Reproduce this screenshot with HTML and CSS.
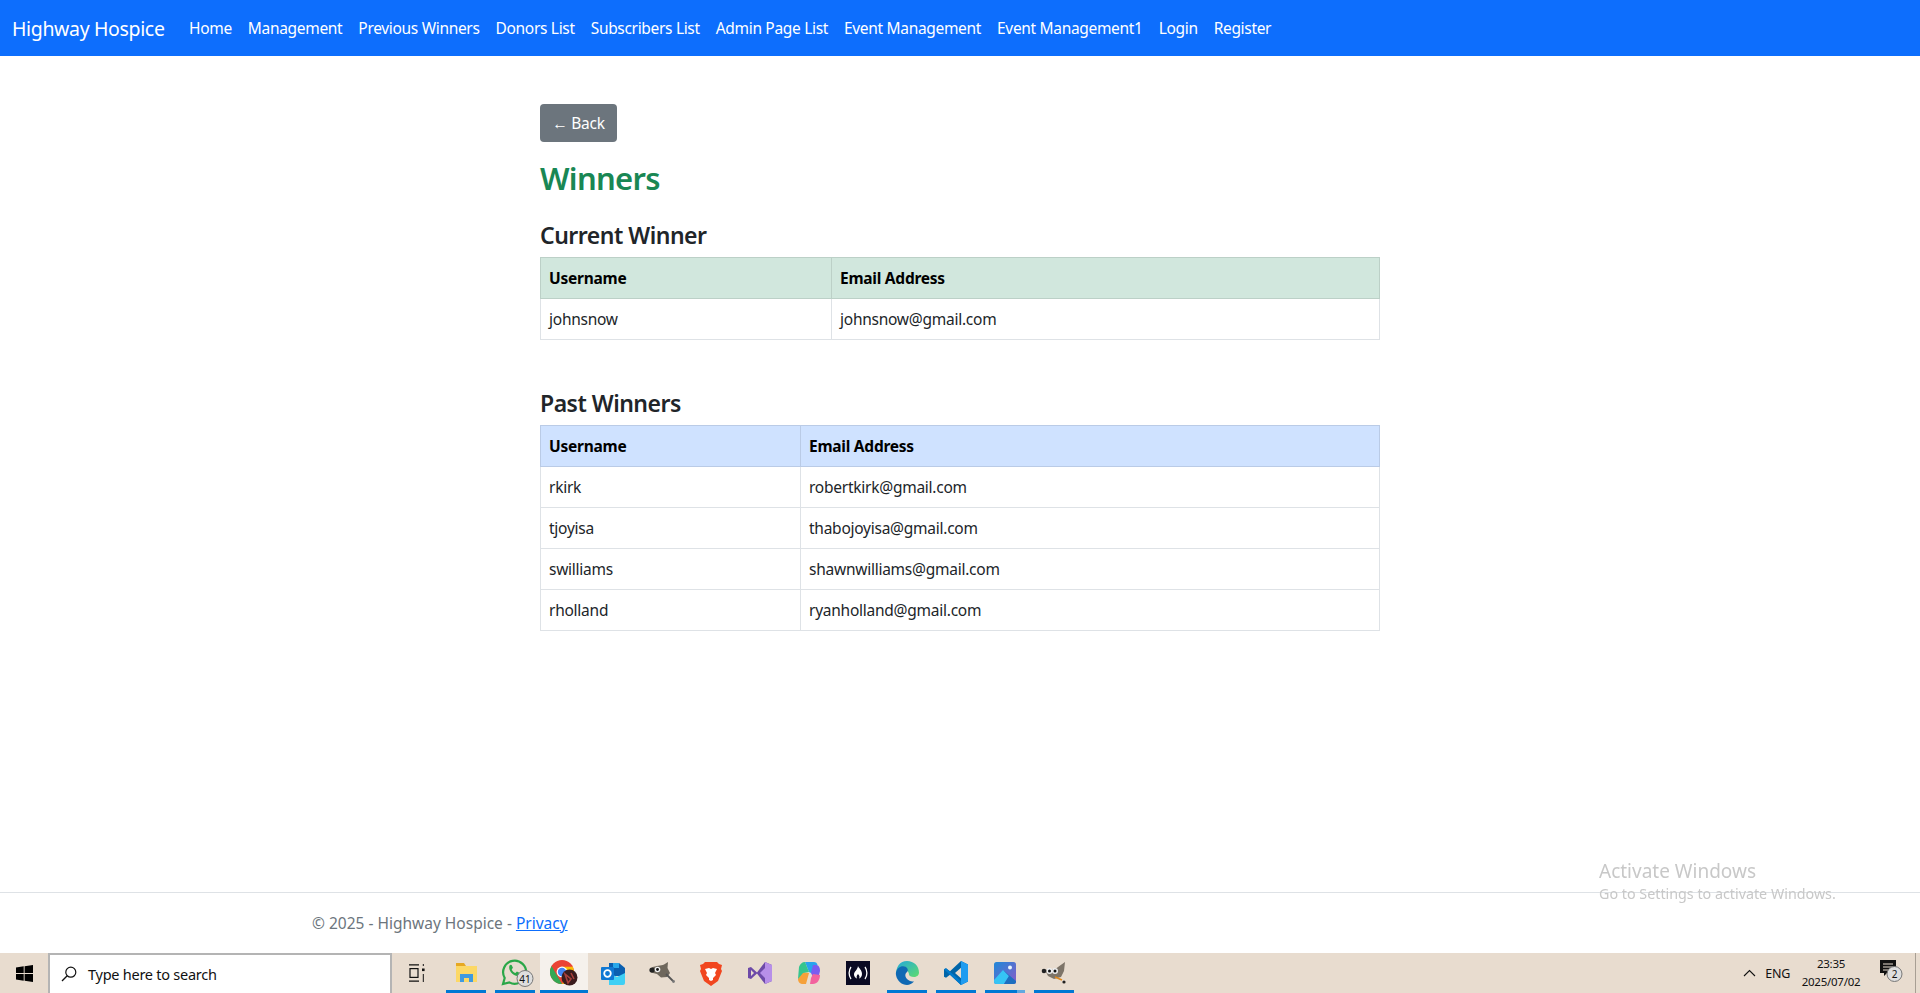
FILE: index.html

```html
<!DOCTYPE html>
<html lang="en">
<head>
    <meta charset="UTF-8">
    <meta name="viewport" content="width=device-width, initial-scale=1.0">
    <title>Winners - Highway Hospice</title>
    <link rel="stylesheet" href="styles.css">
</head>
<body>

    <!-- Navbar -->
    <header class="navbar">
        <a class="brand" href="#">Highway Hospice</a>
        <nav class="nav-links">
            <a href="#">Home</a>
            <a href="#">Management</a>
            <a href="#">Previous Winners</a>
            <a href="#">Donors List</a>
            <a href="#">Subscribers List</a>
            <a href="#">Admin Page List</a>
            <a href="#">Event Management</a>
            <a href="#">Event Management1</a>
            <a href="#">Login</a>
            <a href="#">Register</a>
        </nav>
    </header>

    <main class="content">
        <a class="back-button" href="#">← Back</a>
        <h2 class="page-title">Winners</h2>

        <h4 class="section-title">Current Winner</h4>
        <table class="winners current">
            <thead>
                <tr>
                    <th class="col-name">Username</th>
                    <th>Email Address</th>
                </tr>
            </thead>
            <tbody>
                <tr><td>johnsnow</td><td>johnsnow@gmail.com</td></tr>
            </tbody>
        </table>

        <h4 class="section-title past-title">Past Winners</h4>
        <table class="winners past">
            <thead>
                <tr>
                    <th class="col-name">Username</th>
                    <th>Email Address</th>
                </tr>
            </thead>
            <tbody>
                <tr><td>rkirk</td><td>robertkirk@gmail.com</td></tr>
                <tr><td>tjoyisa</td><td>thabojoyisa@gmail.com</td></tr>
                <tr><td>swilliams</td><td>shawnwilliams@gmail.com</td></tr>
                <tr><td>rholland</td><td>ryanholland@gmail.com</td></tr>
            </tbody>
        </table>
    </main>

    <footer class="footer">
        <span>© 2025 - Highway Hospice - </span><a href="#">Privacy</a>
    </footer>

    <!-- Windows taskbar -->
    <div class="taskbar">
        <div class="start">
            <svg width="17" height="17" viewBox="0 0 17 17"><path fill="#000" d="M0 2.4 7.7 1.3V8H0zM8.6 1.2 17 0V8H8.6zM0 9h7.7v6.7L0 14.6zM8.6 9H17v8l-8.4-1.2z"/></svg>
        </div>
        <div class="search">
            <svg width="16" height="16" viewBox="0 0 16 16"><circle cx="9.8" cy="6.2" r="5" fill="none" stroke="#111" stroke-width="1.2"/><path d="M6.2 9.8 1 15" stroke="#111" stroke-width="1.3"/></svg>
            <span>Type here to search</span>
        </div>
        <div class="task-item taskview">
            <svg width="17" height="18" viewBox="0 0 17 18"><g fill="none" stroke="#111" stroke-width="1.2"><path d="M1 .8h10M1 17.2h10"/><rect x="2" y="4.6" width="8" height="8.8"/></g><rect x="14" y="4.5" width="2.6" height="2.6" fill="#111"/><path d="M15.3 0v2M15.3 10v8" stroke="#111" stroke-width="1"/></svg>
        </div>
        <div class="task-item open">
            <svg width="24" height="22" viewBox="0 0 24 22"><path fill="#e6a823" d="M2 1h8l2 3H2z"/><rect x="2" y="4" width="21" height="16" fill="#fcd866"/><path fill="#3f9ae0" d="M6 20v-8h13v8h-4v-4H10v4z"/></svg>
        </div>
        <div class="task-item open">
            <svg class="whatsapp" width="36" height="30" viewBox="0 0 36 30"><path fill="none" stroke="#2aa748" stroke-width="2.200" d="M3 26l1.700-6A11.500 11.500 0 1 1 9.300 24.400z"/><path fill="#2aa748" d="M9.500 7.500c1-1 2-.8 2.400 0l1 2.300-1.200 1.600c.8 1.700 2 2.800 3.700 3.600l1.500-1.400 2.500 1.100c.6 1 .2 2.200-1 3-3 1.500-10.900-4.200-8.900-10.200z"/><circle cx="25" cy="20.500" r="8" fill="#dedede" stroke="#777" stroke-width="1"/><text x="25" y="24.800" class="badge-num" text-anchor="middle">41</text></svg>
        </div>
        <div class="task-item open active">
            <svg width="28" height="26" viewBox="0 0 28 26"><circle cx="12" cy="12" r="12" fill="#ea4335"/><path fill="#34a853" d="M1.600 6 7 15.500 12 24A12 12 0 0 1 1.600 6z"/><path fill="#fbbc05" d="M12 6.800h10.800A12 12 0 0 1 12 24l5-8.500z"/><circle cx="12" cy="12" r="5.400" fill="#fff"/><circle cx="12" cy="12" r="4.200" fill="#4285f4"/><circle cx="19.500" cy="17.500" r="8" fill="#3a1c1e"/><path d="M15 14l6 5-3 4zM21 13l3 6" stroke="#a8403c" stroke-width="1.600" fill="none"/></svg>
        </div>
        <div class="task-item">
            <svg width="24" height="24" viewBox="0 0 24 24"><path fill="#0a5fb0" d="M8 2h10l6 5v8H8z"/><path fill="#28a8ea" d="M12 2h6v5h-6z"/><path fill="#3fd0f5" d="M8 12l8 4 8-4v10a2 2 0 0 1-2 2H8z"/><rect x="0" y="6" width="13" height="13" rx="1" fill="#0f78d4"/><circle cx="6.500" cy="12.500" r="3.300" fill="none" stroke="#fff" stroke-width="1.800"/></svg>
        </div>
        <div class="task-item">
            <svg width="26" height="22" viewBox="0 0 26 22"><path fill="#6e675c" d="M3 5.500c4-2 9-1.500 12-3L19 0l-.5 6 2.500 5-3 4-6 .5-4-3.500-6-1.500z"/><circle cx="3" cy="8" r="2.600" fill="#222"/><circle cx="8.500" cy="7.500" r="2.800" fill="#eee"/><circle cx="8.500" cy="7.500" r="1.400" fill="#111"/><path d="M17 12l7 7" stroke="#555" stroke-width="1.800"/><circle cx="24.500" cy="19.500" r="1.400" fill="#777"/></svg>
        </div>
        <div class="task-item">
            <svg width="22" height="25" viewBox="0 0 22 25"><path fill="#f1461f" d="M5 1h12l2 2 3 1-1 4 1 2-4 10-7 5-7-5-4-10 1-2-1-4 3-1z"/><path fill="#fff" d="M5 8l4-1 2 1 2-1 4 1-2 4 1 2-3 3v2l-2 1-2-1v-2l-3-3 1-2z"/></svg>
        </div>
        <div class="task-item">
            <svg width="24" height="24" viewBox="0 0 24 24"><path fill="#6d4aa8" d="M0 7l3-1 6 5.500L17 1l7 3v16l-7 3-8-10.500L3 18l-3-1zM3 9v6l3-3z"/><path fill="#b78fe8" d="M17 1l7 3v16l-7 3zM17 7l-5 5 5 5z"/></svg>
        </div>
        <div class="task-item">
            <svg width="24" height="24" viewBox="0 0 24 24"><path fill="#2aa3ee" d="M8 1h9c2 0 3 1 3.500 3L16 13l-4-2z"/><path fill="#7a5cf0" d="M16 4h3c3 0 4 3 4 6l-1 4-6 2 -2-4z"/><path fill="#f2629e" d="M16 13l7 1c0 5-3 9-7 9h-3l1-6z"/><path fill="#f5a13a" d="M4 11l8 1-3 11H6c-3 0-5-2-5-5z"/><path fill="#35c58e" d="M8 1C5 1 3 3 2 6L1 18l5-6 6-1z"/></svg>
        </div>
        <div class="task-item">
            <svg width="24" height="24" viewBox="0 0 24 24"><rect width="24" height="24" fill="#0a0a23"/><path fill="none" stroke="#fff" stroke-width="1.300" d="M5 6c-2.500 3.500-2.500 8.500 0 12M19 6c2.500 3.500 2.500 8.500 0 12"/><path fill="#fff" d="M12 5c1 2.500 4 4 4 8 0 2.500-1.500 4-3 4.500 1-1.500.5-3-1-4.500-1 1.200-2 2.500-1 4.500-1.500-.5-3-2-3-4 0-3 3.500-4.500 4-8.500z"/></svg>
        </div>
        <div class="task-item open">
            <svg width="24" height="24" viewBox="0 0 24 24"><defs><linearGradient id="edgeA" x1="0" y1="0" x2="1" y2="1"><stop offset="0" stop-color="#22a8dc"/><stop offset="1" stop-color="#5fdc6e"/></linearGradient></defs><path fill="url(#edgeA)" d="M12 0c7 0 12 5 12 11.500 0 3-2.500 4.500-5 4.500-3 0-5-1-5-2.500 0-4-5-6.500-8-4-2 1.500-4 4-5 5C.500 6 5 0 12 0z"/><path fill="#0f69b4" d="M1 14c-.5-3 1-7 5-8.500 5-1.500 8.500 3 6 5.500-3 2-2 7 3 9 1.500.5 3 .5 4 .5-2 2-4.500 3.500-7 3.500C7 24 2 20 1 14z"/></svg>
        </div>
        <div class="task-item open">
            <svg width="24" height="24" viewBox="0 0 24 24"><path fill="#0065a9" d="M17 0l7 3.500v17L17 24 6 13.700 2 16.800 0 15.800V8.200l2-1 4 3.100zM17 6.800 11 12l6 5.200z"/><path fill="#1f9cf0" d="M17 0l7 3.500v17L17 24z"/><path fill="#007acc" d="M2 7.200 17 20v4L0 8.200z"/></svg>
        </div>
        <div class="task-item open partial">
            <svg width="22" height="22" viewBox="0 0 22 22"><defs><linearGradient id="photoA" x1="0" y1="0" x2="1" y2="1"><stop offset="0" stop-color="#1e88d8"/><stop offset="1" stop-color="#8a5cc8"/></linearGradient></defs><rect width="22" height="22" rx="2.500" fill="url(#photoA)"/><circle cx="16" cy="5.500" r="2" fill="#e8f4fc"/><path fill="#35c4f5" d="M0 18l9-10 6 6-5 8H2.500A2.500 2.500 0 0 1 0 19.500z"/><path fill="#1c6fc0" d="M9 8l13 11v.500a2.500 2.500 0 0 1-2.500 2.500H10l5-8z"/></svg>
        </div>
        <div class="task-item open">
            <svg width="26" height="22" viewBox="0 0 26 22"><path fill="#7d7468" d="M4 8c5-1 10 0 13-3l7-5-1 9-3 6-7 2-6-3z"/><circle cx="3" cy="9" r="2.300" fill="#222"/><circle cx="8.500" cy="9" r="3" fill="#eee"/><circle cx="8.500" cy="9" r="1.500" fill="#111"/><circle cx="14" cy="9" r="3" fill="#eee"/><circle cx="14" cy="9" r="1.500" fill="#111"/><path d="M14 15l7 3" stroke="#e08a1e" stroke-width="1.800"/><circle cx="23" cy="20" r="1.600" fill="#222"/></svg>
        </div>

        <div class="tray">
            <svg class="tray-chevron" width="13" height="8" viewBox="0 0 13 8"><path d="M1 7l5.500-5.500L12 7" fill="none" stroke="#111" stroke-width="1.100"/></svg>
            <span class="tray-lang">ENG</span>
            <div class="tray-clock">
                <span>23:35</span>
                <span>2025/07/02</span>
            </div>
            <div class="tray-notify">
                <svg width="24" height="24" viewBox="0 0 24 24"><path fill="#111" d="M1 1h16v13H8l-3 3v-3H1z"/><path stroke="#e8dccf" stroke-width="1" d="M4 5h10M4 8h10M4 11h7"/><circle cx="15.500" cy="15" r="7.500" fill="#dedede" stroke="#777"/><text x="15.500" y="19" class="badge-num" text-anchor="middle">2</text></svg>
            </div>
            <div class="show-desktop"></div>
        </div>
    </div>

    <!-- Activation watermark sits over the page -->
    <div class="watermark">
        <p class="watermark-title">Activate Windows</p>
        <p class="watermark-text">Go to Settings to activate Windows.</p>
    </div>

</body>
</html>
```

FILE: styles.css

```css
/* General Styles */
* {
    box-sizing: border-box;
}

html, body {
    height: 100%;
}

body {
    margin: 0;
    display: flex;
    flex-direction: column;
    min-height: 993px;
    overflow: hidden;
    font-family: "Noto Sans", "Open Sans", sans-serif;
    font-size: 15.5px;
    letter-spacing: -0.25px;
    color: #212529;
    background: #fff;
}

a {
    text-decoration: none;
}

/* Navbar */
.navbar {
    height: 56px;
    flex: none;
    display: flex;
    align-items: center;
    padding-left: 12px;
    background: #0d6efd;
}

.brand {
    width: 169px;
    font-size: 19.5px;
    letter-spacing: -0.35px;
    color: #fff;
}

.nav-links {
    display: flex;
}

.nav-links a {
    padding: 0 8px;
    font-size: 15.5px;
    letter-spacing: -0.32px;
    color: #fff;
}

/* Main content */
.content {
    flex: 1;
    width: 840px;
    margin-left: 540px;
    padding-top: 48px;
}

.back-button {
    display: inline-block;
    height: 38px;
    line-height: 38px;
    width: 77px;
    text-align: center;
    background: #6c757d;
    color: #fff;
    border-radius: 4px;
}

.page-title {
    margin: 16px 0 0;
    height: 40px;
    line-height: 40px;
    font-size: 31px;
    font-weight: 600;
    letter-spacing: -0.7px;
    color: #198754;
}

.section-title {
    margin: 20px 0 0;
    height: 39px;
    line-height: 34px;
    font-size: 23px;
    font-weight: 600;
    letter-spacing: -0.5px;
}

.past-title {
    margin-top: 46px;
}

/* Tables */
.winners {
    width: 840px;
    table-layout: fixed;
    border-collapse: collapse;
}

.winners th, .winners td {
    height: 41px;
    padding: 0 8px;
    text-align: left;
    border: 1px solid #dee2e6;
}

.winners th {
    font-weight: 700;
    color: #000;
}

.current th {
    background: #d1e7dd;
    border-color: #bcd0c7;
}

.current .col-name {
    width: 291px;
}

.past th {
    background: #cfe2ff;
    border-color: #bacbe6;
}

.past .col-name {
    width: 260px;
}

/* Footer */
.footer {
    flex: none;
    height: 61px;
    padding: 19px 0 0 312px;
    border-top: 1px solid #dee2e6;
    letter-spacing: 0;
    color: #6c757d;
}

.footer a {
    color: #0d6efd;
    text-decoration: underline;
}

/* Taskbar */
.taskbar {
    flex: none;
    height: 40px;
    display: flex;
    background: #e8dccf;
    font-size: 14.5px;
    color: #111;
}

.start {
    width: 48px;
    display: flex;
    align-items: center;
    justify-content: center;
}

.search {
    width: 344px;
    display: flex;
    align-items: center;
    gap: 11px;
    padding-left: 11px;
    background: #fff;
    border: 2px solid #b4b4b4;
    border-bottom: none;
}

.task-item {
    width: 48px;
    margin-right: 1px;
    display: flex;
    align-items: center;
    justify-content: center;
    position: relative;
}

.taskview {
    margin-right: 2px;
}

.task-item.open::after {
    content: "";
    position: absolute;
    left: 4px;
    right: 4px;
    bottom: 0;
    height: 3px;
    background: #0078d4;
}

.task-item.active {
    background: #f5f1ec;
}

.task-item.active::after {
    left: 0;
    right: 0;
}

.task-item.partial::after {
    background: linear-gradient(to right, #0078d4 80%, #62a8e0 80%);
}

.whatsapp {
    margin-left: 6px;
}

.badge-num {
    font-size: 10px;
    fill: #111;
    letter-spacing: 0;
}

.tray {
    flex: 1;
    display: flex;
    align-items: center;
    justify-content: flex-end;
}

.tray-chevron {
    margin-right: 9px;
}

.tray-lang {
    margin-right: 8px;
    font-size: 12.5px;
}

.tray-clock {
    width: 66px;
    margin-right: 7px;
    display: flex;
    flex-direction: column;
    align-items: center;
    gap: 2px;
    font-size: 11.5px;
    line-height: 16px;
}

.tray-notify {
    width: 44px;
    padding-left: 8px;
}

.show-desktop {
    width: 5px;
    height: 40px;
    border-left: 1px solid #a89f94;
}

/* Activation watermark */
.watermark {
    position: fixed;
    left: 1599px;
    top: 858px;
    color: #c8c8c8;
    letter-spacing: 0;
    pointer-events: none;
}

.watermark p {
    margin: 0;
}

.watermark-title {
    font-size: 19px;
    line-height: 26px;
}

.watermark-text {
    font-size: 14.3px;
    line-height: 20px;
}
```
